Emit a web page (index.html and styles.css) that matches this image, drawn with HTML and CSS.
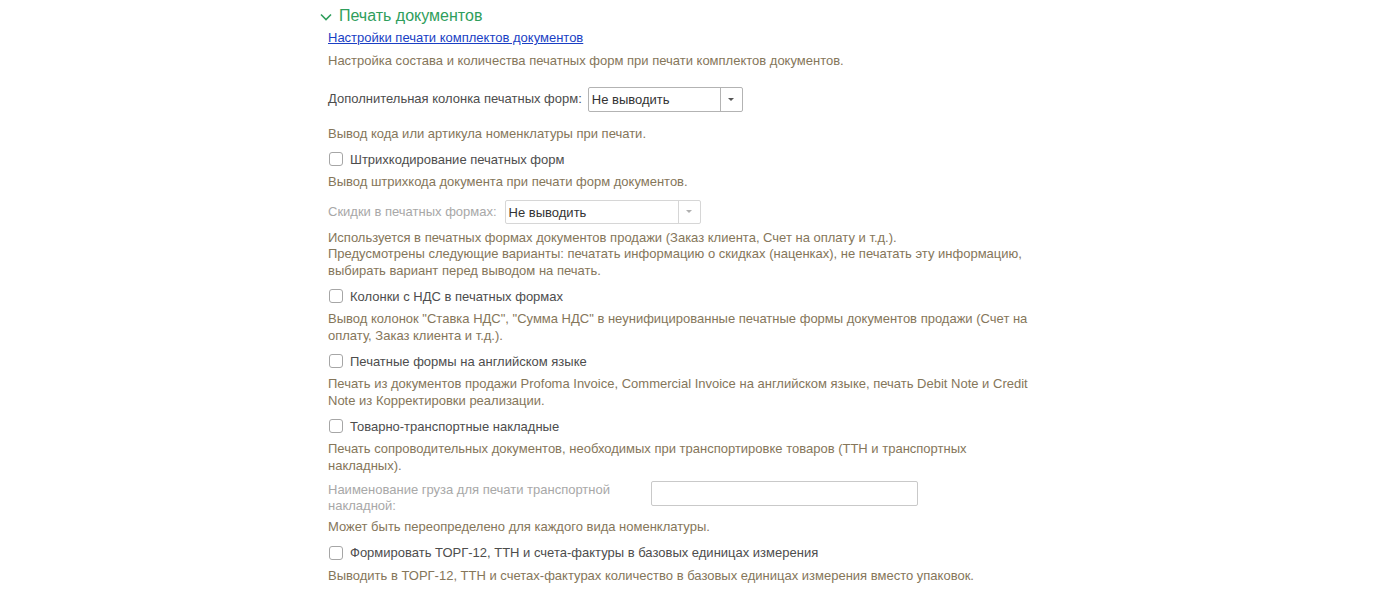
FILE: index.html
```html
<!DOCTYPE html>
<html lang="ru">
<head>
  <meta charset="UTF-8">
  <title>Печать документов</title>
  <link rel="stylesheet" href="styles.css">
</head>
<body>

  <div class="container">
    <div class="group-title">
      <svg class="chevron" width="12" height="8" viewBox="0 0 12 8"><path d="M1 1.5 L6 6.5 L11 1.5" fill="none" stroke="#2f9e5c" stroke-width="1.6"/></svg>
      <span>Печать документов</span>
    </div>

    <div class="group-body">
      <a href="#" class="link">Настройки печати комплектов документов</a>
      <p class="note note-first">Настройка состава и количества печатных форм при печати комплектов документов.</p>

      <div class="field field-1">
        <label class="field-label">Дополнительная колонка печатных форм:</label>
        <div class="select select-1">
          <span class="select-value">Не выводить</span>
          <span class="select-btn"><span class="arrow"></span></span>
        </div>
      </div>
      <p class="note note-after-field">Вывод кода или артикула номенклатуры при печати.</p>

      <label class="check"><span class="box"></span>Штрихкодирование печатных форм</label>
      <p class="note">Вывод штрихкода документа при печати форм документов.</p>

      <div class="field field-2 disabled">
        <label class="field-label">Скидки в печатных формах:</label>
        <div class="select select-2">
          <span class="select-value">Не выводить</span>
          <span class="select-btn"><span class="arrow"></span></span>
        </div>
      </div>
      <p class="note">Используется в печатных формах документов продажи (Заказ клиента, Счет на оплату и т.д.).<br>
        Предусмотрены следующие варианты: печатать информацию о скидках (наценках), не печатать эту информацию, выбирать вариант перед выводом на печать.</p>

      <label class="check"><span class="box"></span>Колонки с НДС в печатных формах</label>
      <p class="note">Вывод колонок "Ставка НДС", "Сумма НДС" в неунифицированные печатные формы документов продажи (Счет на оплату, Заказ клиента и т.д.).</p>

      <label class="check"><span class="box"></span>Печатные формы на английском языке</label>
      <p class="note">Печать из документов продажи Profoma Invoice, Commercial Invoice на английском языке, печать Debit Note и Credit Note из Корректировки реализации.</p>

      <label class="check"><span class="box"></span>Товарно-транспортные накладные</label>
      <p class="note">Печать сопроводительных документов, необходимых при транспортировке товаров (ТТН и транспортных накладных).</p>

      <div class="field field-3 disabled">
        <label class="field-label wide">Наименование груза для печати транспортной накладной:</label>
        <input type="text" class="text-input">
      </div>
      <p class="note note-tight">Может быть переопределено для каждого вида номенклатуры.</p>

      <label class="check"><span class="box"></span>Формировать ТОРГ-12, ТТН и счета-фактуры в базовых единицах измерения</label>
      <p class="note">Выводить в ТОРГ-12, ТТН и счетах-фактурах количество в базовых единицах измерения вместо упаковок.</p>
    </div>
  </div>

</body>
</html>
```

FILE: styles.css
```css
body {
  margin: 0;
  background: #fff;
  font-family: Arial, "Liberation Sans", sans-serif;
  font-size: 13px;
  color: #4d4d4d;
}

.container {
  width: 740px;
  margin: 0 auto;
  padding-top: 6px;
}

.group-title {
  display: flex;
  align-items: center;
  gap: 7px;
  height: 20px;
  font-size: 16px;
  color: #2f9e5c;
}

.chevron {
  margin-top: 1px;
}

.group-body {
  padding-left: 8px;
  width: 706px;
}

.link {
  display: inline-block;
  margin-top: 4px;
  line-height: 16px;
  color: #1a3fc4;
  text-decoration: underline;
}

.note {
  margin: 6px 0 0;
  line-height: 16.5px;
  color: #85765a;
}

.note-first {
  margin-top: 7px;
}

.note-after-field {
  margin-top: 14px;
}

.note-tight {
  margin-top: 5px;
}

.field {
  display: flex;
  align-items: center;
  margin-top: 9px;
}

.field-1 {
  margin-top: 17px;
}

.field-label {
  margin-right: 6px;
  line-height: 16px;
}

.disabled .field-label {
  color: #a8a8a8;
}

.field-2 .field-label {
  margin-right: 8px;
}

.field-3 {
  align-items: flex-start;
  margin-top: 7px;
}

.field-label.wide {
  width: 300px;
  margin-right: 23px;
  padding-top: 1px;
}

.select {
  display: flex;
  height: 25px;
  box-sizing: border-box;
  border: 1px solid #b3b3b3;
  border-radius: 2px;
  background: #fff;
}

.select-1 {
  width: 155px;
}

.select-2 {
  width: 196px;
  height: 24px;
  border-color: #d6d6d6;
}

.select-value {
  flex: 1;
  padding-left: 3px;
  line-height: 23px;
  color: #333;
}

.select-btn {
  width: 21px;
  border-left: 1px solid #b3b3b3;
  display: flex;
  align-items: center;
  justify-content: center;
}

.select-2 .select-btn {
  border-left-color: #d6d6d6;
}

.arrow {
  width: 0;
  height: 0;
  border-left: 3px solid transparent;
  border-right: 3px solid transparent;
  border-top: 3px solid #555;
}

.select-2 .arrow {
  border-top-color: #b0b0b0;
}

.text-input {
  width: 267px;
  height: 25px;
  box-sizing: border-box;
  margin: 0;
  border: 1px solid #c9c9c9;
  border-radius: 2px;
  background: #fff;
}

.check {
  display: flex;
  align-items: center;
  gap: 7px;
  height: 18px;
  margin-top: 8px;
  padding-left: 1px;
  color: #4d4d4d;
}

.box {
  width: 14px;
  height: 14px;
  box-sizing: border-box;
  border: 1px solid #a6a6a6;
  border-radius: 3px;
  background: #fff;
}
```
